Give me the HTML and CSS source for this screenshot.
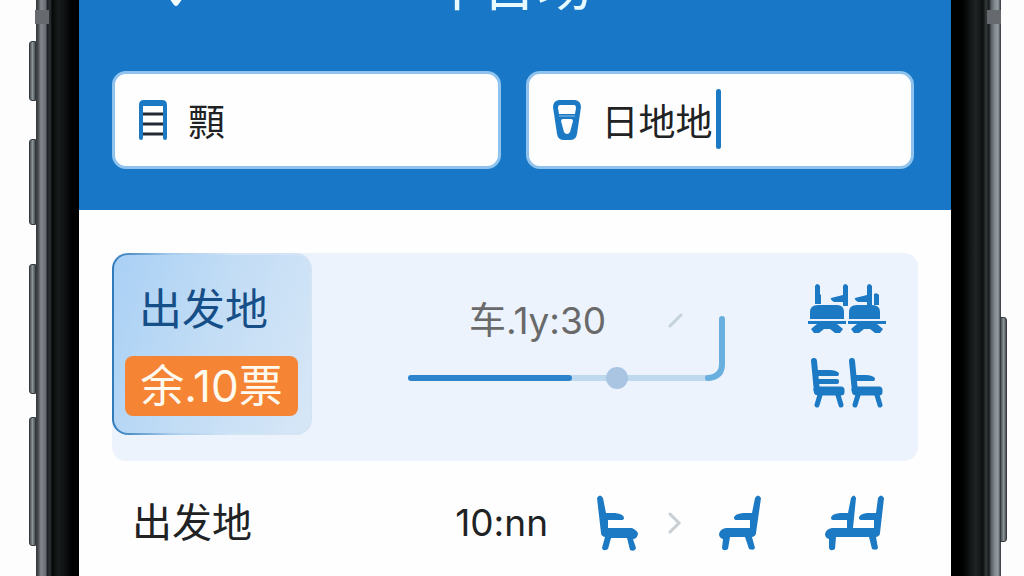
FILE: index.html
```html
<!DOCTYPE html>
<html lang="zh-CN">
<head>
    <meta charset="UTF-8">
    <meta name="viewport" content="width=device-width, initial-scale=1.0">
    <title>车票</title>
    <link rel="stylesheet" href="styles.css">
</head>
<body>
    <div class="phone">
        <div class="bezel bezel-left">
            <span class="band"></span>
            <span class="side-btn mute"></span>
            <span class="side-btn action"></span>
            <span class="side-btn vol-up"></span>
            <span class="side-btn vol-down"></span>
        </div>

        <div class="screen">
            <header class="header">
                <div class="topbar">
                    <svg class="pin" width="30" height="20" viewBox="0 0 30 20"><path d="M3 4h24L17 18q-2 2-4 0z" fill="#f0fbff"/></svg>
                    <h1>车台场</h1>
                </div>
                <form class="search">
                    <label class="field">
                        <svg width="28" height="40" viewBox="0 0 28 40" fill="none">
                            <path d="M2 38V5q0-3 3-3h18q3 0 3 3v33" stroke="#1c79c4" stroke-width="4" stroke-linecap="round"/>
                            <path d="M4 5h20" stroke="#1c79c4" stroke-width="2"/>
                            <path d="M4 14h20M4 24h20M4 34h20" stroke="#222b33" stroke-width="3"/>
                        </svg>
                        <input type="text" name="from" value="顠" aria-label="出发地">
                    </label>
                    <label class="field">
                        <svg width="28" height="40" viewBox="0 0 28 40">
                            <path d="M6 0h16q6 1 6 7l-4 27q-1 6-7 6h-6q-6 0-7-6L0 7q0-6 6-7zM7 5q-2 0-2 3l1 6h16l1-6q0-3-2-3zM10 19q-2 0-2 2l3 11q1 2 3 2t3-2l3-11q0-2-2-2z" fill="#1c79c4" fill-rule="evenodd"/>
                            <path d="M6 16h16" stroke="#8fc0e6" stroke-width="1"/>
                        </svg>
                        <input type="text" name="to" value="日地地" aria-label="目的地">
                        <span class="caret"></span>
                    </label>
                </form>
            </header>

            <main class="list">
                <section class="card">
                    <div class="station">
                        <h2>出发地</h2>
                        <span class="badge">余.10票</span>
                    </div>
                    <div class="trip">
                        <p>车.1y:30</p>
                        <svg width="318" height="76" viewBox="0 0 318 76" fill="none" stroke-linecap="round">
                            <path d="M164 65h136" stroke="#bed9ee" stroke-width="6"/>
                            <path d="M3 65h158" stroke="#2b84cc" stroke-width="6"/>
                            <path d="M300 65q14-1 14-14V6" stroke="#69afdf" stroke-width="6"/>
                            <path d="M262 13l11-11" stroke="#c5d1db" stroke-width="3"/>
                            <circle cx="209" cy="65" r="11" fill="#a9c5e2"/>
                        </svg>
                    </div>
                    <div class="seats">
                        <svg width="78" height="50" viewBox="0 0 78 50" fill="#1c79c4">
                            <path d="M7 2q2-4 5 0v8l1 1v9H7zM35 2q2-4 5 0v20h-5v-4H26q-4-2-3-4l12-3zM59 2q2-4 5 0v19h-5v-3h-9q-4-2-3-4l12-3zM66 10q3-2 5 1v10h-5z"/>
                            <path d="M2 35v-7q0-7 8-7h19q7 0 7 7v7zM41 35v-7q0-7 8-7h15q8 0 8 7v7z"/>
                            <path d="M0 37h38v3h-9l6 5-3 4h-5l-5-4h-6l-5 4H6l-3-4 6-5H0zM40 37h38v3h-9l6 5-3 4h-5l-5-4h-6l-5 4h-5l-3-4 6-5h-9z"/>
                        </svg>
                        <svg width="78" height="50" viewBox="0 0 78 50" fill="none" stroke="#1c79c4" stroke-linecap="round" stroke-linejoin="round">
                            <path d="M6 3l3 31" stroke-width="6"/>
                            <path d="M9 32h24v2H10z" stroke-width="7"/>
                            <path d="M12 37l-3 10M30 37l3 10" stroke-width="5"/>
                            <path d="M10 14h12q5 0 7 2H10zM10 23h19v1H10z" stroke-width="4"/>
                            <path d="M44 3l3 31" stroke-width="6"/>
                            <path d="M47 32h24v2H48z" stroke-width="7"/>
                            <path d="M50 37l-3 10M69 37l3 10" stroke-width="5"/>
                            <path d="M48 19h10q5 0 7 2H48z" stroke-width="4"/>
                        </svg>
                    </div>
                </section>

                <section class="row">
                    <h3>出发地</h3>
                    <time>10:nn</time>
                    <svg class="seat" width="42" height="56" viewBox="0 0 42 56">
                        <path d="M0 3Q3-2 6 3l3 15h9q9 1 9 5 0 2-3 2H11v8h24q6 3 6 6-1 5-5 5l3 9q-1 4-6 2l-3-12H14L11 54q-5 3-6-1l3-11q-4-1-4-4z" fill="#1c79c4"/>
                    </svg>
                    <svg class="chevron" width="14" height="22" viewBox="0 0 14 22" fill="none"><path d="M2 2l9 9-9 9" stroke="#c9ced3" stroke-width="3" stroke-linecap="round"/></svg>
                    <svg class="seat seat-back" width="42" height="56" viewBox="0 0 42 56">
                        <path d="M42 3Q39-2 36 3l-3 15h-9q-9 1-9 5 0 2 3 2h13v8H7q-6 1-7 6 0 4 4 5L3 53q1 4 6 1l2-12h15l4 12q5 2 6-1l-3-11q4-1 4-4z" fill="#1c79c4"/>
                    </svg>
                    <svg class="seat" width="59" height="56" viewBox="0 0 59 56">
                        <path d="M59 3Q56-2 53 3l-2 15h-9q-8 1-8 5 0 2 3 2h12v8H28L31 3Q29-2 26 3l-3 15h-8q-9 1-9 5 0 2 3 2h13v8H7q-6 1-7 6 0 4 4 5L4 53q1 4 6 1l1-12h33l3 12q5 2 6-1l-2-11q4-1 4-4z" fill="#1c79c4"/>
                    </svg>
                </section>
            </main>
        </div>

        <div class="bezel bezel-right">
            <span class="band"></span>
            <span class="side-btn power"></span>
        </div>
    </div>
</body>
</html>
```
FILE: styles.css
```css
* {
    box-sizing: border-box;
}

body {
    margin: 0;
    background-color: #fdfdfd;
    font-family: Inter, "Noto Sans CJK SC", sans-serif;
    color: #202224;
}

h1, h2, h3, p {
    margin: 0;
    font-weight: 400;
}

svg {
    display: block;
    flex-shrink: 0;
}

.phone {
    display: flex;
    height: 100vh;
    padding: 0 23px 0 36px;
    overflow: hidden;
}

/* phone frame */
.bezel {
    position: relative;
    flex-shrink: 0;
}

.bezel-left {
    width: 43px;
    background: linear-gradient(to right, #35383b 0, #44484c 2px, #85888e 5px, #686c72 10px, #1c1f22 11px, #303438 14px, #070808 16px, #171b1d 22px, #111516 27px, #000 36px);
}

.bezel-right {
    width: 50px;
    background: linear-gradient(to left, #30343a 0, #4f555b 1px, #949da4 3px, #858c92 6px, #555b61 10px, #171a1d 12px, #33383a 15px, #0c0f10 18px, #1e2424 25px, #000 39px);
}

.band {
    position: absolute;
    top: 10px;
    width: 14px;
    height: 14px;
    background-color: #666a6f;
}

.bezel-left .band {
    left: -1px;
}

.bezel-right .band {
    right: 0;
}

.side-btn {
    position: absolute;
    left: -7px;
    width: 7px;
    border: 1px solid #34393d;
    border-radius: 3px 0 0 3px;
    background: linear-gradient(to right, #4b5155, #8b9396 50%, #4c5256);
}

.mute {
    top: 41px;
    height: 60px;
}

.action {
    top: 139px;
    height: 86px;
}

.vol-up {
    top: 264px;
    height: 130px;
}

.vol-down {
    top: 417px;
    height: 129px;
}

.power {
    top: 317px;
    left: auto;
    right: -6px;
    height: 225px;
    border-radius: 0 3px 3px 0;
}

.screen {
    flex: 1;
    min-width: 0;
    background-color: #fefefe;
}

/* header */
.header {
    padding: 0 37px 41px 33px;
    background-color: #1878c7;
    overflow: hidden;
}

/* scrolled partly out of view */
.topbar {
    display: flex;
    align-items: flex-end;
    height: 60px;
    margin-top: -45px;
    margin-bottom: 56px;
    color: #e6faff;
}

.pin {
    margin: 0 236px 8px 49px;
}

.topbar h1 {
    font-size: 55px;
    line-height: 60px;
}

.search {
    display: flex;
    gap: 25px;
}

.field {
    display: flex;
    flex: 1;
    align-items: center;
    min-width: 0;
    height: 98px;
    padding: 0 24px;
    border: 3px solid #8fc3ee;
    border-radius: 14px;
    background-color: #fefefe;
}

.field input {
    width: 114px;
    margin-left: 21px;
    padding: 0;
    border: none;
    outline: none;
    background: none;
    font-family: inherit;
    font-size: 37px;
    color: #202224;
}

.caret {
    width: 5px;
    height: 60px;
    margin-top: -3px;
    border-radius: 3px;
    background-color: #1c79c4;
}

/* results */
.list {
    padding: 43px 33px 0;
}

.card {
    display: flex;
    align-items: flex-start;
    padding-right: 32px;
    padding-bottom: 26px;
    border-radius: 14px;
    background-color: #ecf3fc;
}

.station {
    flex-shrink: 0;
    width: 200px;
    height: 182px;
    padding: 24px 12px 0 11px;
    border: 2px solid transparent;
    border-radius: 16px;
    background:
        linear-gradient(110deg, #a9d0f5, #c3ddf5 50%, #d7e7f7) padding-box,
        linear-gradient(to right, #2f7ab9, #a9cdee 30%, #d3e4f5 60%) border-box;
}

.station h2 {
    padding-left: 14px;
    font-size: 43px;
    line-height: 60px;
    color: #164e88;
}

.badge {
    display: block;
    margin-top: 17px;
    border-radius: 8px;
    background-color: #f58534;
    font-size: 44px;
    line-height: 60px;
    text-align: center;
    color: #fffaf0;
}

.trip {
    display: grid;
    flex: 1;
    justify-content: center;
    padding: 60px 0 0 14px;
}

.trip p,
.trip svg {
    grid-area: 1 / 1;
}

.trip p {
    padding-left: 61px;
    margin-top: -20px;
    font-size: 37px;
    line-height: 56px;
    color: #69696a;
}

.seats {
    display: flex;
    flex-direction: column;
    gap: 24px;
    padding-top: 31px;
}

.row {
    display: flex;
    align-items: center;
    padding: 32px 34px 0 20px;
}

.row h3 {
    flex: 1;
    font-size: 40px;
    line-height: 60px;
}

.row time {
    font-size: 37px;
    line-height: 60px;
}

.seat {
    margin-left: 49px;
}

.chevron {
    margin-left: 29px;
}

.seat-back {
    margin: 0 15px 0 37px;
}
```
